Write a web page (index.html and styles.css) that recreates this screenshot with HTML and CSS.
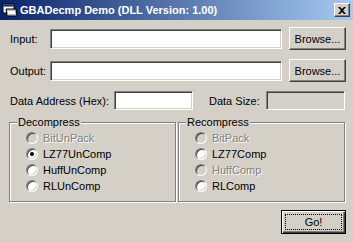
FILE: index.html
```html
<!DOCTYPE html>
<html lang="en">
<head>
    <meta charset="UTF-8">
    <title>GBADecmp Demo (DLL Version: 1.00)</title>
    <link rel="stylesheet" href="styles.css">
</head>
<body>
    <div class="window">
        <div class="titlebar">
            <svg class="app-icon" width="16" height="16" viewBox="0 0 16 16">
                <rect x="1" y="2" width="11" height="9" fill="#ffffff" stroke="#000000" stroke-width="1"/>
                <rect x="1.5" y="2.5" width="10" height="2" fill="#0a246a"/>
                <path d="M4 7 H14 L15 14 H5 Z" fill="#c0c0c0" stroke="#000000" stroke-width="1"/>
                <rect x="6" y="9" width="7" height="3" fill="#ffffff"/>
            </svg>
            <span class="title">GBADecmp Demo (DLL Version: 1.00)</span>
            <button class="close-btn">
                <svg width="8" height="7" viewBox="0 0 8 7">
                    <path d="M0 0 H2 L4 2 L6 0 H8 L5 3.5 L8 7 H6 L4 5 L2 7 H0 L3 3.5 Z" fill="#000000"/>
                </svg>
            </button>
        </div>

        <div class="content">
            <div class="field-row">
                <label class="label label-short">Input:</label>
                <div class="edit edit-long"></div>
                <button class="btn btn-browse">Browse...</button>
            </div>
            <div class="field-row">
                <label class="label label-short">Output:</label>
                <div class="edit edit-long"></div>
                <button class="btn btn-browse">Browse...</button>
            </div>
            <div class="field-row data-row">
                <label class="label label-addr">Data Address (Hex):</label>
                <div class="edit edit-small"></div>
                <label class="label label-size">Data Size:</label>
                <div class="edit edit-small edit-disabled"></div>
            </div>

            <div class="groups">
                <div class="group">
                    <span class="group-title">Decompress</span>
                    <div class="radio disabled"><span class="radio-dot"></span>BitUnPack</div>
                    <div class="radio checked"><span class="radio-dot"></span>LZ77UnComp</div>
                    <div class="radio"><span class="radio-dot"></span>HuffUnComp</div>
                    <div class="radio"><span class="radio-dot"></span>RLUnComp</div>
                </div>
                <div class="group">
                    <span class="group-title">Recompress</span>
                    <div class="radio disabled"><span class="radio-dot"></span>BitPack</div>
                    <div class="radio"><span class="radio-dot"></span>LZ77Comp</div>
                    <div class="radio disabled"><span class="radio-dot"></span>HuffComp</div>
                    <div class="radio"><span class="radio-dot"></span>RLComp</div>
                </div>
            </div>

            <div class="actions">
                <button class="btn btn-go"><span class="focus">Go!</span></button>
            </div>
        </div>
    </div>
</body>
</html>
```

FILE: styles.css
```css
body {
    margin: 0;
    background-color: #d4d0c8;
}

.window {
    width: 353px;
    height: 242px;
    background-color: #d4d0c8;
    font-family: "Liberation Sans", Arial, sans-serif;
    font-size: 11px;
    color: #000000;
    overflow: hidden;
}

/* Title bar */
.titlebar {
    position: relative;
    height: 20px;
    display: flex;
    align-items: center;
    padding-left: 2px;
    background: linear-gradient(to right, #0a246a, #a6caf0);
}

.app-icon {
    flex: none;
}

.title {
    margin-left: 2px;
    color: #ffffff;
    font-weight: bold;
    font-size: 11px;
    white-space: nowrap;
}

.close-btn {
    position: absolute;
    top: 3px;
    right: 3px;
    width: 16px;
    height: 14px;
    padding: 0;
    display: flex;
    align-items: center;
    justify-content: center;
    background-color: #d4d0c8;
    border: 1px solid;
    border-color: #ffffff #404040 #404040 #ffffff;
    box-shadow: inset -1px -1px #808080;
}

/* Dialog body */
.content {
    padding: 7px 7px 0 10px;
}

.field-row {
    display: flex;
    align-items: center;
    height: 23px;
}

.field-row + .field-row {
    margin-top: 9px;
}

.data-row {
    height: 19px;
}

.field-row.data-row {
    margin-top: 9px;
}

.label {
    flex: none;
    white-space: nowrap;
}

.label-short {
    width: 40px;
}

.label-addr {
    width: 104px;
}

.label-size {
    width: 57px;
    margin-left: 16px;
}

.edit {
    box-sizing: border-box;
    height: 20px;
    background-color: #ffffff;
    border: 1px solid;
    border-color: #808080 #ffffff #ffffff #808080;
    box-shadow: inset 1px 1px #404040, inset -1px -1px #d4d0c8;
}

.edit-long {
    width: 232px;
}

.edit-small {
    width: 79px;
    height: 19px;
}

.edit-disabled {
    background-color: #d4d0c8;
}

.btn {
    box-sizing: border-box;
    padding: 0;
    font-family: inherit;
    font-size: 11px;
    color: #000000;
    background-color: #d4d0c8;
    border: 1px solid;
    border-color: #ffffff #404040 #404040 #ffffff;
    box-shadow: inset -1px -1px #808080;
}

.btn-browse {
    width: 57px;
    height: 23px;
    margin-left: 7px;
}

/* Group boxes */
.groups {
    display: flex;
    gap: 2px;
    margin-top: 12px;
    margin-left: -1px;
}

.group {
    position: relative;
    box-sizing: border-box;
    width: 167px;
    height: 80px;
    padding: 7px 0 0 16px;
    border: 1px solid #808080;
    box-shadow: inset 1px 1px #ffffff, 1px 1px #ffffff;
}

.group-title {
    position: absolute;
    top: -8px;
    left: 7px;
    padding: 0 1px;
    line-height: 14px;
    background-color: #d4d0c8;
}

.radio {
    display: flex;
    align-items: center;
    height: 16px;
    white-space: nowrap;
}

.radio-dot {
    box-sizing: border-box;
    flex: none;
    width: 12px;
    height: 12px;
    margin-right: 5px;
    border-radius: 50%;
    background-color: #ffffff;
    border: 1px solid;
    border-color: #808080 #ffffff #ffffff #808080;
    box-shadow: inset 1px 1px #404040, inset -1px -1px #d4d0c8;
    display: flex;
    align-items: center;
    justify-content: center;
}

.radio.checked .radio-dot::after {
    content: "";
    width: 4px;
    height: 4px;
    border-radius: 50%;
    background-color: #000000;
}

.radio.disabled {
    color: #808080;
    text-shadow: 1px 1px #ffffff;
}

.radio.disabled .radio-dot {
    background-color: #d4d0c8;
}

/* Go button */
.actions {
    display: flex;
    justify-content: flex-end;
    margin-top: 8px;
}

.btn-go {
    width: 65px;
    height: 24px;
    padding: 3px;
    border: 1px solid #000000;
    box-shadow: inset 1px 1px #ffffff, inset -1px -1px #404040, inset -2px -2px #808080;
}

.focus {
    box-sizing: border-box;
    display: flex;
    align-items: center;
    justify-content: center;
    width: 100%;
    height: 100%;
    border: 1px dotted #000000;
}
```
